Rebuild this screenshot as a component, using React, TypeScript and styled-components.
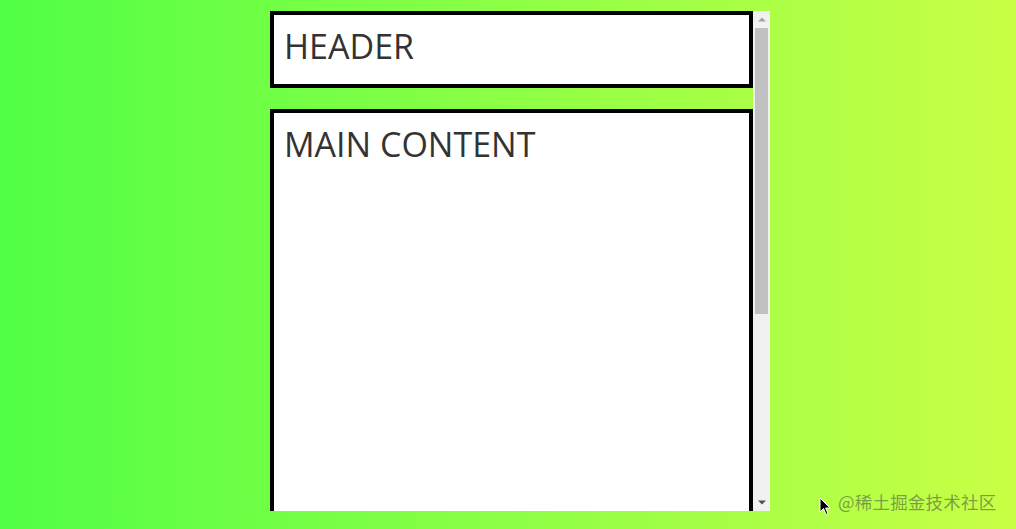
import React from "react";
import styled, { createGlobalStyle } from "styled-components";

const GlobalStyle = createGlobalStyle`
  html, body {
    margin: 0;
    padding: 0;
    height: 100%;
  }
  body {
    background: linear-gradient(to right, #50ff45 0%, #c9ff45 100%);
    font-family: 'Open Sans', 'Noto Sans', sans-serif;
    overflow: hidden;
  }
`;

const Page = styled.div`
  position: relative;
  width: 1016px;
  height: 529px;
  padding: 11px 0 0 270px;
  box-sizing: border-box;
`;

const Frame = styled.div`
  display: flex;
  width: 500px;
  height: 500px;
`;

const Viewport = styled.div`
  flex: 1;
  overflow: hidden;
  display: flex;
  flex-direction: column;
  gap: 21px;
`;

const Scrollbar = styled.div`
  flex: 0 0 17px;
  display: flex;
  flex-direction: column;
  background: #f1f1f1;
`;

const ArrowButton = styled.div`
  flex: 0 0 17px;
  display: flex;
  align-items: center;
  justify-content: center;
`;

const Track = styled.div`
  flex: 1;
  padding: 0 2px;
`;

const Thumb = styled.div<{ $size: number }>`
  height: ${(p) => p.$size}px;
  background: #c1c1c1;
`;

const Panel = styled.section<{ $height: number }>`
  flex: 0 0 auto;
  height: ${(p) => p.$height}px;
  box-sizing: border-box;
  border: 4px solid #000;
  background: #fff;
  padding: 8px 10px;
`;

const PanelTitle = styled.h1`
  margin: 0;
  font-size: 34px;
  font-weight: 400;
  line-height: 46px;
  color: #333;
`;

const Watermark = styled.div`
  position: absolute;
  left: 838px;
  top: 489px;
  font-family: 'Noto Sans CJK SC', sans-serif;
  font-size: 17.5px;
  color: rgba(80, 90, 70, 0.6);
  letter-spacing: 0.2px;
  white-space: nowrap;
`;

const Pointer = styled.svg`
  position: absolute;
  left: 819px;
  top: 497px;
`;

const Arrow = ({ up }: { up?: boolean }) => (
  <svg width="8" height="5" viewBox="0 0 8 5">
    <path
      d={up ? "M0 4.5 L4 0.5 L8 4.5 Z" : "M0 0.5 L4 4.5 L8 0.5 Z"}
      fill={up ? "#a3a3a3" : "#505050"}
    />
  </svg>
);

export default function App() {
  return (
    <>
      <GlobalStyle />
      <Page>
        <Frame>
          <Viewport>
            <Panel $height={77}>
              <PanelTitle>HEADER</PanelTitle>
            </Panel>
            <Panel $height={716}>
              <PanelTitle>MAIN CONTENT</PanelTitle>
            </Panel>
          </Viewport>
          <Scrollbar>
            <ArrowButton>
              <Arrow up />
            </ArrowButton>
            <Track>
              <Thumb $size={286} />
            </Track>
            <ArrowButton>
              <Arrow />
            </ArrowButton>
          </Scrollbar>
        </Frame>
        <Pointer width="12" height="20" viewBox="0 0 12 20">
          <path d="M1 1 L1 15 L4.5 11.5 L7 17.5 L9 16.6 L6.6 11 L11 11 Z" fill="#000" stroke="#fff" strokeWidth="1" />
        </Pointer>
        <Watermark>@稀土掘金技术社区</Watermark>
      </Page>
    </>
  );
}
